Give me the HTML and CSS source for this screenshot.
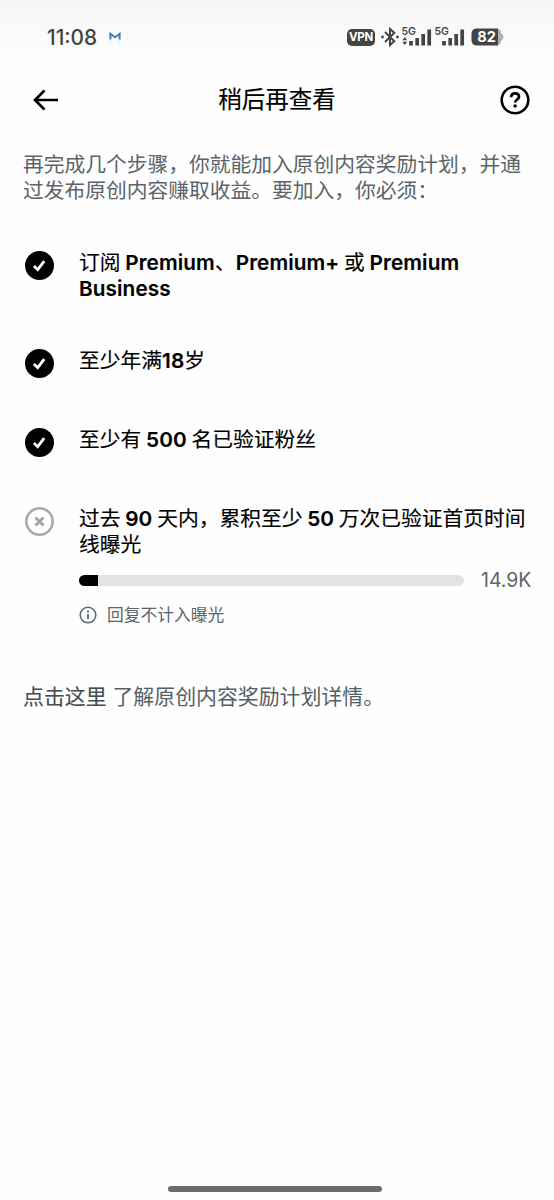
FILE: index.html
```html
<!DOCTYPE html>
<html lang="zh-CN">
<head>
<meta charset="utf-8">
<title>稍后再查看</title>
<link rel="stylesheet" href="styles.css">
</head>
<body>
<div class="screen">
  <div class="status">
    <div class="status-left">
      <span class="time">11:08</span>
      <svg class="mail" width="12" height="10" viewBox="0 0 12 10"><path d="M1.400 7.500V1.800L6 5.200l4.600-3.400v5.700" fill="none" stroke="#4380b5" stroke-width="2"/><path d="M.8 9.200h2M9 9.200h2" stroke="#e9dcb8" stroke-width="1"/></svg>
    </div>
    <div class="status-right">
      <span class="vpn">VPN</span>
      <svg class="bluetooth" width="18" height="20" viewBox="0 0 18 20"><path d="M4 5l9.300 9.200L9 18V2l4.300 3.800L4 15" fill="none" stroke="#444" stroke-width="2"/><circle cx="1.500" cy="10" r="1.400" fill="#444"/><circle cx="16.500" cy="10" r="1.400" fill="#444"/></svg>
      <svg class="signal" width="30" height="20" viewBox="0 0 30 20"><text class="net" x="-.5" y="7.500">5G</text><path d="M.4 13.200l2.400-3.200 2.400 3.200zM.4 14.800L2.800 18l2.400-3.200z" fill="#444"/><path d="M9 18.500v-4.500M15.200 18.500v-7.500M21.200 18.500v-11.500M27.200 18.500V2.500" stroke="#444" stroke-width="3.700"/></svg>
      <svg class="signal" width="30" height="20" viewBox="0 0 30 20"><text class="net" x="-.5" y="7.500">5G</text><path d="M9 18.500v-4.500M15.200 18.500v-7.500M21.200 18.500v-11.500M27.200 18.500V2.500" stroke="#444" stroke-width="3.700"/></svg>
      <svg class="battery" width="33" height="18" viewBox="0 0 33 18"><path d="M27 1q3 .5 3 4 2.500 1.500 2.500 4T30 13q0 3.500-3 4z" fill="#b0b0b0"/><path d="M6 .5h21v17H6Q.5 17.500.5 12V6Q.5.5 6 .5z" fill="#444"/><text class="charge" x="15.500" y="14">82</text></svg>
    </div>
  </div>

  <header class="header">
    <svg width="26" height="22" viewBox="0 0 26 22"><path d="M11.500 1.500L2 11l9.500 9.500M2 11h23" fill="none" stroke="#000" stroke-width="2.700"/></svg>
    <h1 class="title">稍后再查看</h1>
    <svg width="30" height="30" viewBox="0 0 30 30"><circle cx="15" cy="15" r="13.300" fill="none" stroke="#000" stroke-width="2.600"/><path d="M11.100 12.200c.1-2.500 1.700-3.900 4-3.900s3.900 1.400 3.900 3.400c0 2.900-3.800 2.800-3.800 5.800" fill="none" stroke="#000" stroke-width="2.700"/><circle cx="15.100" cy="21" r="1.800"/></svg>
  </header>

  <main class="content">
    <p class="intro">再完成几个步骤，你就能加入原创内容奖励计划，并通<br>过发布原创内容赚取收益。要加入，你必须：</p>

    <ul class="steps">
      <li class="step">
        <svg class="mark" viewBox="0 0 29 29"><circle cx="14.500" cy="14.500" r="14.500"/><path d="M8.900 15l3.800 3.700 6.500-8.600" fill="none" stroke="#fff" stroke-width="2.800"/></svg>
        <div class="label">订阅 <b>Premium</b>、<b>Premium+</b> 或 <b>Premium<br>Business</b></div>
      </li>
      <li class="step">
        <svg class="mark" viewBox="0 0 29 29"><circle cx="14.500" cy="14.500" r="14.500"/><path d="M8.900 15l3.800 3.700 6.500-8.600" fill="none" stroke="#fff" stroke-width="2.800"/></svg>
        <div class="label">至少年满<b>18</b>岁</div>
      </li>
      <li class="step">
        <svg class="mark" viewBox="0 0 29 29"><circle cx="14.500" cy="14.500" r="14.500"/><path d="M8.900 15l3.800 3.700 6.500-8.600" fill="none" stroke="#fff" stroke-width="2.800"/></svg>
        <div class="label">至少有 <b>500</b> 名已验证粉丝</div>
      </li>
      <li class="step">
        <svg class="mark" viewBox="0 0 29 29"><circle cx="14.500" cy="14.500" r="13.200" fill="none" stroke="#a7a7a7" stroke-width="2.500"/><path d="M10.500 10.500l8 8M18.500 10.500l-8 8" stroke="#a0a0a0" stroke-width="2.700"/></svg>
        <div class="detail">
          <div class="label">过去 <b>90</b> 天内，累积至少 <b>50</b> 万次已验证首页时间<br>线曝光</div>
          <div class="progress">
            <div class="track"><div class="fill"></div></div>
            <span class="count">14.9K</span>
          </div>
          <div class="note">
            <svg width="18" height="18" viewBox="0 0 18 18"><circle cx="9" cy="9" r="7.800" fill="none" stroke="#5b6469" stroke-width="1.500"/><path d="M9 8v5" stroke="#5b6469" stroke-width="1.800"/><circle cx="9" cy="5.600" r="1.100" fill="#5b6469"/></svg>
            <span>回复不计入曝光</span>
          </div>
        </div>
      </li>
    </ul>

    <p class="more"><a class="link">点击这里</a> 了解原创内容奖励计划详情。</p>
  </main>
  <div class="home-bar"></div>
</div>
</body>
</html>
```
FILE: styles.css
```css
* { box-sizing: border-box; }
body { margin: 0; background: #fefefe; }
h1, p, ul { margin: 0; padding: 0; }
svg { display: block; flex: none; }

.screen {
  display: flex;
  flex-direction: column;
  width: 554px;
  height: 1200px;
  overflow: hidden;
  background: linear-gradient(#f5f5f5, #fefefe 60px);
  font-family: Inter, "Noto Sans CJK SC", sans-serif;
  color: #000;
  white-space: nowrap;
}

.status {
  display: flex;
  justify-content: space-between;
  align-items: center;
  height: 74px;
  padding: 0 50px 0 47px;
}
.status-left, .status-right { display: flex; align-items: center; }
.status-left { gap: 12px; }
.time { padding-top: 1px; font-size: 20.8px; font-weight: 500; line-height: 24px; color: #444; }
.vpn {
  width: 28px;
  height: 17px;
  border-radius: 5px;
  background: #444;
  color: #fff;
  font-size: 11.5px;
  font-weight: 700;
  line-height: 17px;
  letter-spacing: -0.3px;
  text-align: center;
}
.bluetooth { margin-left: 6px; }
.signal { margin-left: 3px; overflow: visible; }
.battery { margin-left: 6px; }
.net { font-size: 10.5px; font-weight: 600; fill: #444; }
.charge { font-size: 14.5px; font-weight: 700; fill: #fff; text-anchor: middle; }

.header {
  display: flex;
  justify-content: space-between;
  align-items: center;
  height: 51px;
  padding: 0 24px 0 33px;
}
.title {
  margin-right: 5px;
  padding-top: 1px;
  font-size: 23.5px;
  font-weight: 400;
  line-height: 34px;
  -webkit-text-stroke: 0.15px #000;
}

.content { flex: 1; padding: 27px 22px 0 23px; font-size: 20.75px; line-height: 26px; }
.intro { color: #5b6469; }

.steps {
  display: flex;
  flex-direction: column;
  gap: 46px;
  margin-top: 46px;
  list-style: none;
}
.step { display: flex; gap: 25px; min-height: 33px; padding-left: 2px; }
.mark { width: 29px; height: 29px; margin-top: 1px; }
.label { word-spacing: -1.1px; -webkit-text-stroke: 0.15px #000; }
.label b { font-weight: 600; letter-spacing: 0.1px; }
.detail { flex: 1; }

.progress { display: flex; align-items: center; gap: 17px; margin-top: 9px; }
.track { width: 385px; height: 11px; border-radius: 6px; background: #e3e3e3; overflow: hidden; }
.fill { width: 19px; height: 11px; background: #000; }
.count { font-size: 19.4px; color: #5b6469; }

.note {
  display: flex;
  align-items: center;
  gap: 10px;
  margin-top: 9px;
  font-size: 16.75px;
  color: #5b6469;
}

.more { margin-top: 56px; font-size: 20.9px; color: #536066; }
.link { color: #454d52; -webkit-text-stroke: 0.15px #454d52; }

.home-bar {
  align-self: center;
  width: 214px;
  height: 6px;
  margin: 0 4px 8px 0;
  border-radius: 3px;
  background: #6b6b6b;
}
```
